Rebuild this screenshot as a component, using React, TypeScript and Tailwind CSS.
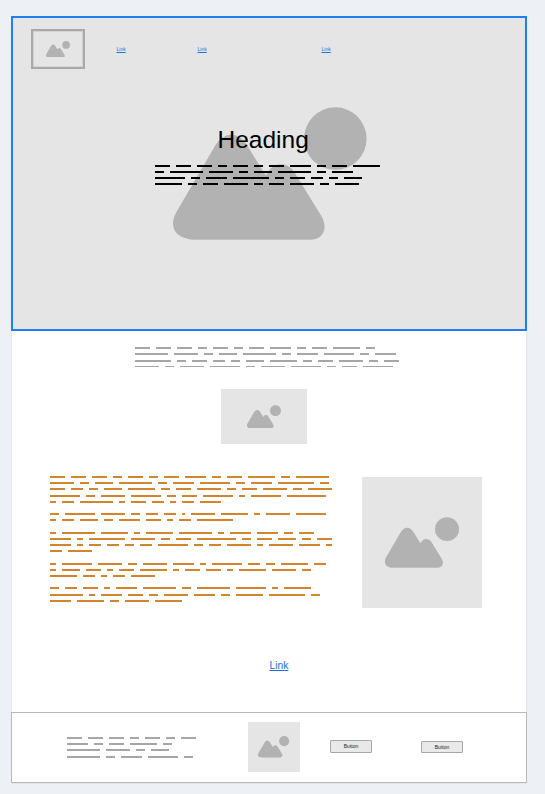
type Line = { gap: number; words: number[]; thin?: boolean };

const line = (gap: number, ...words: number[]): Line => ({ gap, words });

const heroCopy: Line[] = [
  line(0, 5, 5, 5, 3, 5, 3, 5, 7, 3, 5, 9),
  line(4, 3, 11, 8, 3, 6, 11, 3, 7),
  line(4, 10, 3, 7, 12, 3, 5, 4, 3, 6),
  line(4, 9, 3, 5, 8, 3, 5, 8, 3, 8),
];

const introCopy: Line[] = [
  line(0, 5, 5, 5, 3, 5, 3, 5, 7, 3, 5, 9, 3),
  line(4, 11, 8, 3, 6, 11, 3, 7, 10, 3, 7),
  line(5, 12, 3, 5, 4, 3, 6, 9, 3, 5, 8, 3, 5),
  { gap: 4, words: [8, 3, 8, 10, 3, 8, 10, 3, 5, 10], thin: true },
];

const articleCopy: Line[] = [
  line(0, 5, 5, 5, 3, 5, 3, 5, 7, 3, 5, 9, 3, 11),
  line(4, 8, 3, 6, 11, 3, 7, 10, 3, 7, 12, 3),
  line(4, 5, 4, 3, 6, 9, 3, 5, 8, 3, 5, 8, 3, 8),
  line(5, 10, 3, 8, 10, 3, 5, 10, 2, 10, 13),
  line(4, 2, 4, 11, 2, 5, 4, 2, 4, 7),
  line(10, 3, 10, 8, 3, 4, 4, 1, 8, 9, 2, 8, 10),
  line(4, 2, 4, 6, 3, 7, 5, 2, 4, 12),
  line(11, 2, 11, 9, 2, 9, 11, 2, 7, 7, 3, 5),
  line(4, 7, 2, 12, 8, 3, 5, 13, 3, 5, 6, 3, 5),
  line(4, 7, 2, 4, 4, 3, 4, 10, 3, 4, 8, 2, 8, 7, 2),
  line(4, 4, 8),
  line(11, 2, 10, 8, 3, 8, 7, 2, 10, 4, 3, 9, 4),
  line(4, 2, 6, 5, 2, 5, 9, 2, 5, 5, 2, 9, 8, 3),
  line(4, 9, 4, 2, 4, 8),
  line(10, 3, 4, 5, 2, 7, 11, 3, 11, 10, 2, 9),
  line(5, 11, 2, 7, 5, 3, 8, 7, 3, 9, 12, 3),
  line(4, 7, 9, 3, 8, 9),
];

const footerCopy: Line[] = [
  line(0, 5, 5, 5, 3, 5, 3, 5),
  line(4, 7, 3, 5, 9, 3),
  line(4, 11, 8, 3, 6),
  line(5, 11, 3, 7, 10, 3),
];

function DashedText({ lines, color }: { lines: Line[]; color: string }) {
  return (
    <div className="flex flex-col">
      {lines.map((l, i) => (
        <div key={i} className="flex gap-[6px]" style={{ marginTop: l.gap }}>
          {l.words.map((n, j) => (
            <span
              key={j}
              className={`${l.thin ? "h-px" : "h-[2px]"} shrink-0 ${color}`}
              style={{ width: n * 3 }}
            />
          ))}
        </div>
      ))}
    </div>
  );
}

function Picture({ className }: { className: string }) {
  return (
    <svg viewBox="0 0 581 400" className={`shrink-0 fill-[#b2b2b2] ${className}`}>
      <circle cx="487" cy="95" r="94" />
      <path d="M66 399C8 399 -18 362 10 314L121 124C150 70 198 70 227 124L278 206L290 188C306 166 344 166 362 193L444 326C468 366 449 399 411 399Z" />
    </svg>
  );
}

function Button({ className }: { className: string }) {
  return (
    <button
      className={`flex w-[42px] items-center justify-center rounded-[1px] border border-[#a8a8a8] bg-[#e9e9e9] text-[5px] leading-none text-[#222] ${className}`}
    >
      Button
    </button>
  );
}

const navLink = "text-[5px] leading-[6px] text-[#1a73e0] underline";

export default function App() {
  return (
    <div className="h-[794px] w-[545px] overflow-hidden bg-[#edf0f5] pt-[16px] pl-[11px] font-['Liberation_Sans',Arial,sans-serif]">
      <main className="flex h-[768px] w-[516px] flex-col bg-white shadow-[inset_0_0_0_1px_#e3e7eb]">
        <section className="relative h-[315px] shrink-0 border-2 border-[#1f7ff0] bg-[#e5e5e5]">
          <Picture className="absolute top-[89px] left-[159.5px] h-[133px] w-[194px]" />
          <nav className="relative flex h-[51px] items-start pt-[11px] pl-[18px]">
            <div className="flex h-[40px] w-[54px] items-center justify-center border-[2.5px] border-[#a9a9a9] shadow-[inset_0_0_0_1px_#d2d2d2]">
              <Picture className="h-[16.5px] w-[24px]" />
            </div>
            <a className={`mt-[17px] ml-[31.5px] w-[81px] ${navLink}`}>Link</a>
            <a className={`mt-[17px] w-[124px] ${navLink}`}>Link</a>
            <a className={`mt-[17px] ${navLink}`}>Link</a>
          </nav>
          <h1 className="relative mt-[57px] pl-[204.5px] text-[24.5px] leading-[28px] text-black">
            Heading
          </h1>
          <div className="relative mt-[11px] pl-[142.4px]">
            <DashedText lines={heroCopy} color="bg-black" />
          </div>
        </section>

        <section className="mt-[16px] flex h-[42px] shrink-0 pl-[124px]">
          <DashedText lines={introCopy} color="bg-[#a6a6a6]" />
        </section>

        <section className="ml-[210px] flex h-[55px] w-[86px] shrink-0 items-center justify-center bg-[#e5e5e5]">
          <Picture className="h-[23.4px] w-[34px]" />
        </section>

        <section className="mt-[32px] flex h-[132px] shrink-0 pl-[39px]">
          <div className="w-[312px]">
            <DashedText lines={articleCopy} color="bg-[#d4842c]" />
          </div>
          <div className="mt-[1px] flex h-[131px] w-[120px] items-center justify-center bg-[#e5e5e5]">
            <Picture className="h-[51px] w-[74px]" />
          </div>
        </section>

        <a className="mt-[52px] ml-[258.5px] h-[12px] shrink-0 text-[10.3px] leading-[12px] text-[#1a6fdc] underline">
          Link
        </a>

        <footer className="mt-[40px] flex h-[71px] shrink-0 border border-[#b8b8b8]">
          <div className="w-[181px] pt-[24px] pl-[55px]">
            <DashedText lines={footerCopy} color="bg-[#a6a6a6]" />
          </div>
          <div className="mt-[9px] ml-[55px] flex h-[50px] w-[52px] shrink-0 items-center justify-center bg-[#e5e5e5]">
            <Picture className="h-[21.5px] w-[31.2px]" />
          </div>
          <Button className="mt-[27px] ml-[30px] h-[13px]" />
          <Button className="mt-[28px] ml-[49px] h-[12px]" />
        </footer>
      </main>
    </div>
  );
}
